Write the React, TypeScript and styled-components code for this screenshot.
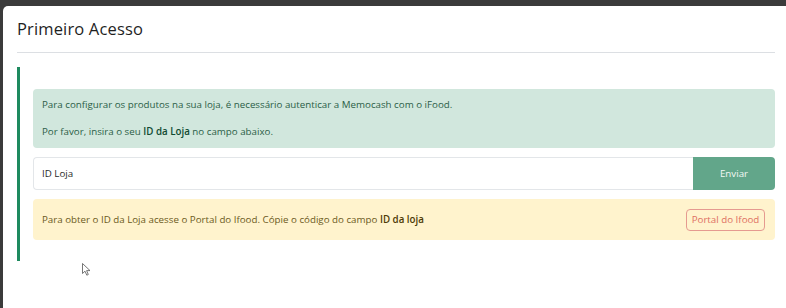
import React from "react";
import styled, { createGlobalStyle } from "styled-components";

const Global = createGlobalStyle`
  html, body { margin: 0; padding: 0; }
  body {
    background: #3b3b3b;
    font-family: "Open Sans", "Noto Sans", sans-serif;
    overflow: hidden;
  }
  * { box-sizing: border-box; }
`;

const Backdrop = styled.div`
  width: 786px;
  height: 308px;
  padding: 6px 0 0 3px;
`;

const Modal = styled.div`
  position: relative;
  height: 302px;
  background: #ffffff;
  border-top-left-radius: 5px;
  padding: 0 11px 0 14px;
`;

const Header = styled.div`
  height: 47px;
  display: flex;
  align-items: center;
  border-bottom: 1px solid #dcdfe3;
  padding-bottom: 1px;
`;

const Title = styled.h1`
  margin: 0;
  font-size: 16.5px;
  font-weight: 500;
  color: #1f1f1f;
  letter-spacing: 0.15px;
`;

const Body = styled.div`
  padding-top: 14px;
`;

const Section = styled.div`
  border-left: 3px solid #1e8a5f;
  padding: 22px 0 21px 13px;
  display: flex;
  flex-direction: column;
  gap: 9px;
`;

const Alert = styled.div<{ $tone: "success" | "warning" }>`
  border-radius: 4px;
  font-size: 9.75px;
  line-height: 15px;
  background: ${(p) => (p.$tone === "success" ? "#d1e7dd" : "#fff3cd")};
  color: ${(p) => (p.$tone === "success" ? "#2b5e47" : "#6b5a22")};
  padding: ${(p) => (p.$tone === "success" ? "8px 9px 9px" : "0 10px 0 9px")};
  ${(p) => p.$tone === "warning" && "height: 41px;"}
  display: flex;
  flex-direction: ${(p) => (p.$tone === "success" ? "column" : "row")};
  gap: 12px;
  ${(p) => p.$tone === "warning" && "align-items: center; justify-content: space-between;"}
  strong {
    font-size: 9.75px;
    font-weight: 600;
    color: ${(p) => (p.$tone === "success" ? "#0f4a32" : "#4d3a05")};
  }
`;

const Line = styled.p`
  margin: 0;
`;

const InputGroup = styled.div`
  display: flex;
  height: 33px;
`;

const Input = styled.div`
  flex: 1;
  border: 1px solid #e3e6e9;
  border-right: none;
  border-radius: 4px 0 0 4px;
  display: flex;
  align-items: center;
  padding-left: 8px;
  font-size: 9.75px;
  color: #2a2a2a;
`;

const SendButton = styled.button`
  width: 82px;
  border: none;
  border-radius: 0 4px 4px 0;
  background: #62a68a;
  color: #f2f8f5;
  font-family: inherit;
  font-size: 9.75px;
  font-weight: 500;
  padding: 0;
`;

const OutlineButton = styled.button`
  height: 22px;
  width: 79px;
  padding: 0;
  border: 1px solid #e59a90;
  border-radius: 4px;
  background: transparent;
  color: #de6f62;
  font-family: inherit;
  font-size: 9.75px;
  flex-shrink: 0;
`;

const Cursor = styled.svg`
  position: absolute;
  left: 79px;
  top: 257px;
`;

export default function App() {
  return (
    <>
      <Global />
      <Backdrop>
        <Modal>
          <Header>
            <Title>Primeiro Acesso</Title>
          </Header>
          <Body>
            <Section>
              <Alert $tone="success">
                <Line>
                  Para configurar os produtos na sua loja, é necessário autenticar a Memocash com o iFood.
                </Line>
                <Line>
                  Por favor, insira o seu <strong>ID da Loja</strong> no campo abaixo.
                </Line>
              </Alert>
              <InputGroup>
                <Input>ID Loja</Input>
                <SendButton>Enviar</SendButton>
              </InputGroup>
              <Alert $tone="warning">
                <Line>
                  Para obter o ID da Loja acesse o Portal do Ifood. Cópie o código do campo{" "}
                  <strong>ID da loja</strong>
                </Line>
                <OutlineButton>Portal do Ifood</OutlineButton>
              </Alert>
            </Section>
          </Body>
          <Cursor width="9" height="13" viewBox="0 0 9 13">
            <path
              d="M0.5 0.5 L0.5 10.5 L3 8.2 L4.8 12.2 L6.3 11.5 L4.6 7.6 L8 7.6 Z"
              fill="#ffffff"
              stroke="#555"
              strokeWidth="0.8"
              strokeLinejoin="round"
            />
          </Cursor>
        </Modal>
      </Backdrop>
    </>
  );
}
